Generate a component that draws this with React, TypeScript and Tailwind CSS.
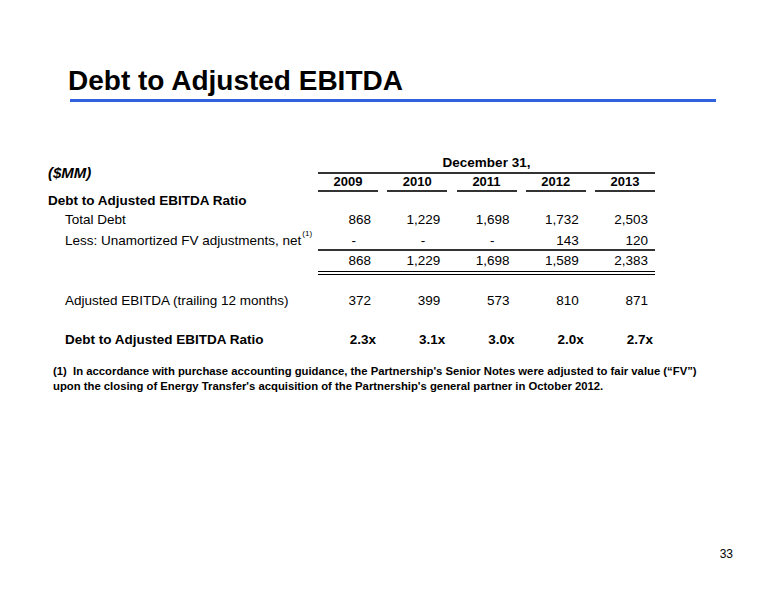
const years = ["2009", "2010", "2011", "2012", "2013"];

type Row = {
  label: string;
  values: string[];
  bold?: boolean;
  sup?: string;
};

const totalDebt: Row = {
  label: "Total Debt",
  values: ["868", "1,229", "1,698", "1,732", "2,503"],
};
const lessFv: Row = {
  label: "Less: Unamortized FV adjustments, net",
  values: ["-", "-", "-", "143", "120"],
  sup: "(1)",
};
const subtotal: Row = {
  label: "",
  values: ["868", "1,229", "1,698", "1,589", "2,383"],
};
const ebitda: Row = {
  label: "Adjusted EBITDA (trailing 12 months)",
  values: ["372", "399", "573", "810", "871"],
};
const ratio: Row = {
  label: "Debt to Adjusted EBITDA Ratio",
  values: ["2.3x", "3.1x", "3.0x", "2.0x", "2.7x"],
  bold: true,
};

function Cells({ values, bold }: { values: string[]; bold?: boolean }) {
  return (
    <div className="flex gap-[9.25px]">
      {values.map((v, i) => (
        <div
          key={i}
          className={
            "w-[60px] text-right " +
            (v === "-" ? "pr-[22px]" : bold ? "pr-[2px] font-bold" : "pr-[7px]")
          }
        >
          {v}
        </div>
      ))}
    </div>
  );
}

function TableRow({ row, className }: { row: Row; className: string }) {
  return (
    <div className={"flex items-center text-[13.5px] leading-[16px] " + className}>
      <div className={"w-[270px] pl-[17px] " + (row.bold ? "font-bold" : "")}>
        {row.label}
        {row.sup && (
          <span className="inline-block align-top text-[8px] leading-[8px] relative -top-[3px] ml-[1px]">
            {row.sup}
          </span>
        )}
      </div>
      <Cells values={row.values} bold={row.bold} />
    </div>
  );
}

export default function App() {
  return (
    <div className="w-[776px] h-[600px] bg-white text-black font-['Liberation_Sans',Arial,sans-serif] flex flex-col">
      <div className="pt-[67px] pl-[68px] text-[28px] leading-[28px] font-bold">
        Debt to Adjusted EBITDA
      </div>
      <div className="ml-[70px] mt-[4px] w-[646px] h-[3px] bg-[#2f62dc]" />

      {/* table */}
      <div className="ml-[48px] mt-[53px] flex flex-col">
        <div className="flex">
          <div className="w-[270px] h-[37px] flex items-center text-[15px] font-bold italic">
            ($MM)
          </div>
          <div className="w-[337px] flex flex-col">
            <div className="h-[17px] flex items-center justify-center text-[13.5px] font-bold">
              December 31,
            </div>
            <div className="h-[2px] bg-[#333]" />
            <div className="flex gap-[9.25px]">
              {years.map((y) => (
                <div key={y} className="w-[60px] flex flex-col">
                  <div className="h-[16px] flex items-center justify-center text-[13px] font-bold">
                    {y}
                  </div>
                  <div className="h-[2px] bg-[#333]" />
                </div>
              ))}
            </div>
          </div>
        </div>

        <div className="h-[19px] flex items-center text-[13.5px] font-bold">
          Debt to Adjusted EBITDA Ratio
        </div>
        <TableRow row={totalDebt} className="h-[18px]" />
        <TableRow row={lessFv} className="h-[20px] pt-[4px]" />
        <div className="flex">
          <div className="w-[270px]" />
          <div className="w-[337px] h-[2px] bg-[#333]" />
        </div>
        <TableRow row={subtotal} className="h-[20px]" />
        <div className="flex">
          <div className="w-[270px]" />
          <div className="w-[337px] h-[4px] border-y border-black" />
        </div>
        <TableRow row={ebitda} className="h-[20px] mt-[16px]" />
        <TableRow row={ratio} className="h-[19px] mt-[19px]" />
      </div>

      {/* footnote */}
      <div className="ml-[53px] mt-[15px] text-[11.3px] leading-[15px] font-bold">
        <div className="whitespace-pre">
          (1)  In accordance with purchase accounting guidance, the Partnership's Senior Notes were adjusted to fair value (“FV”)
        </div>
        <div>
          upon the closing of Energy Transfer's acquisition of the Partnership's general partner in October 2012.
        </div>
      </div>

      <div className="mt-auto mb-[39px] pr-[43px] text-right text-[12px] leading-[14px]">
        33
      </div>
    </div>
  );
}
